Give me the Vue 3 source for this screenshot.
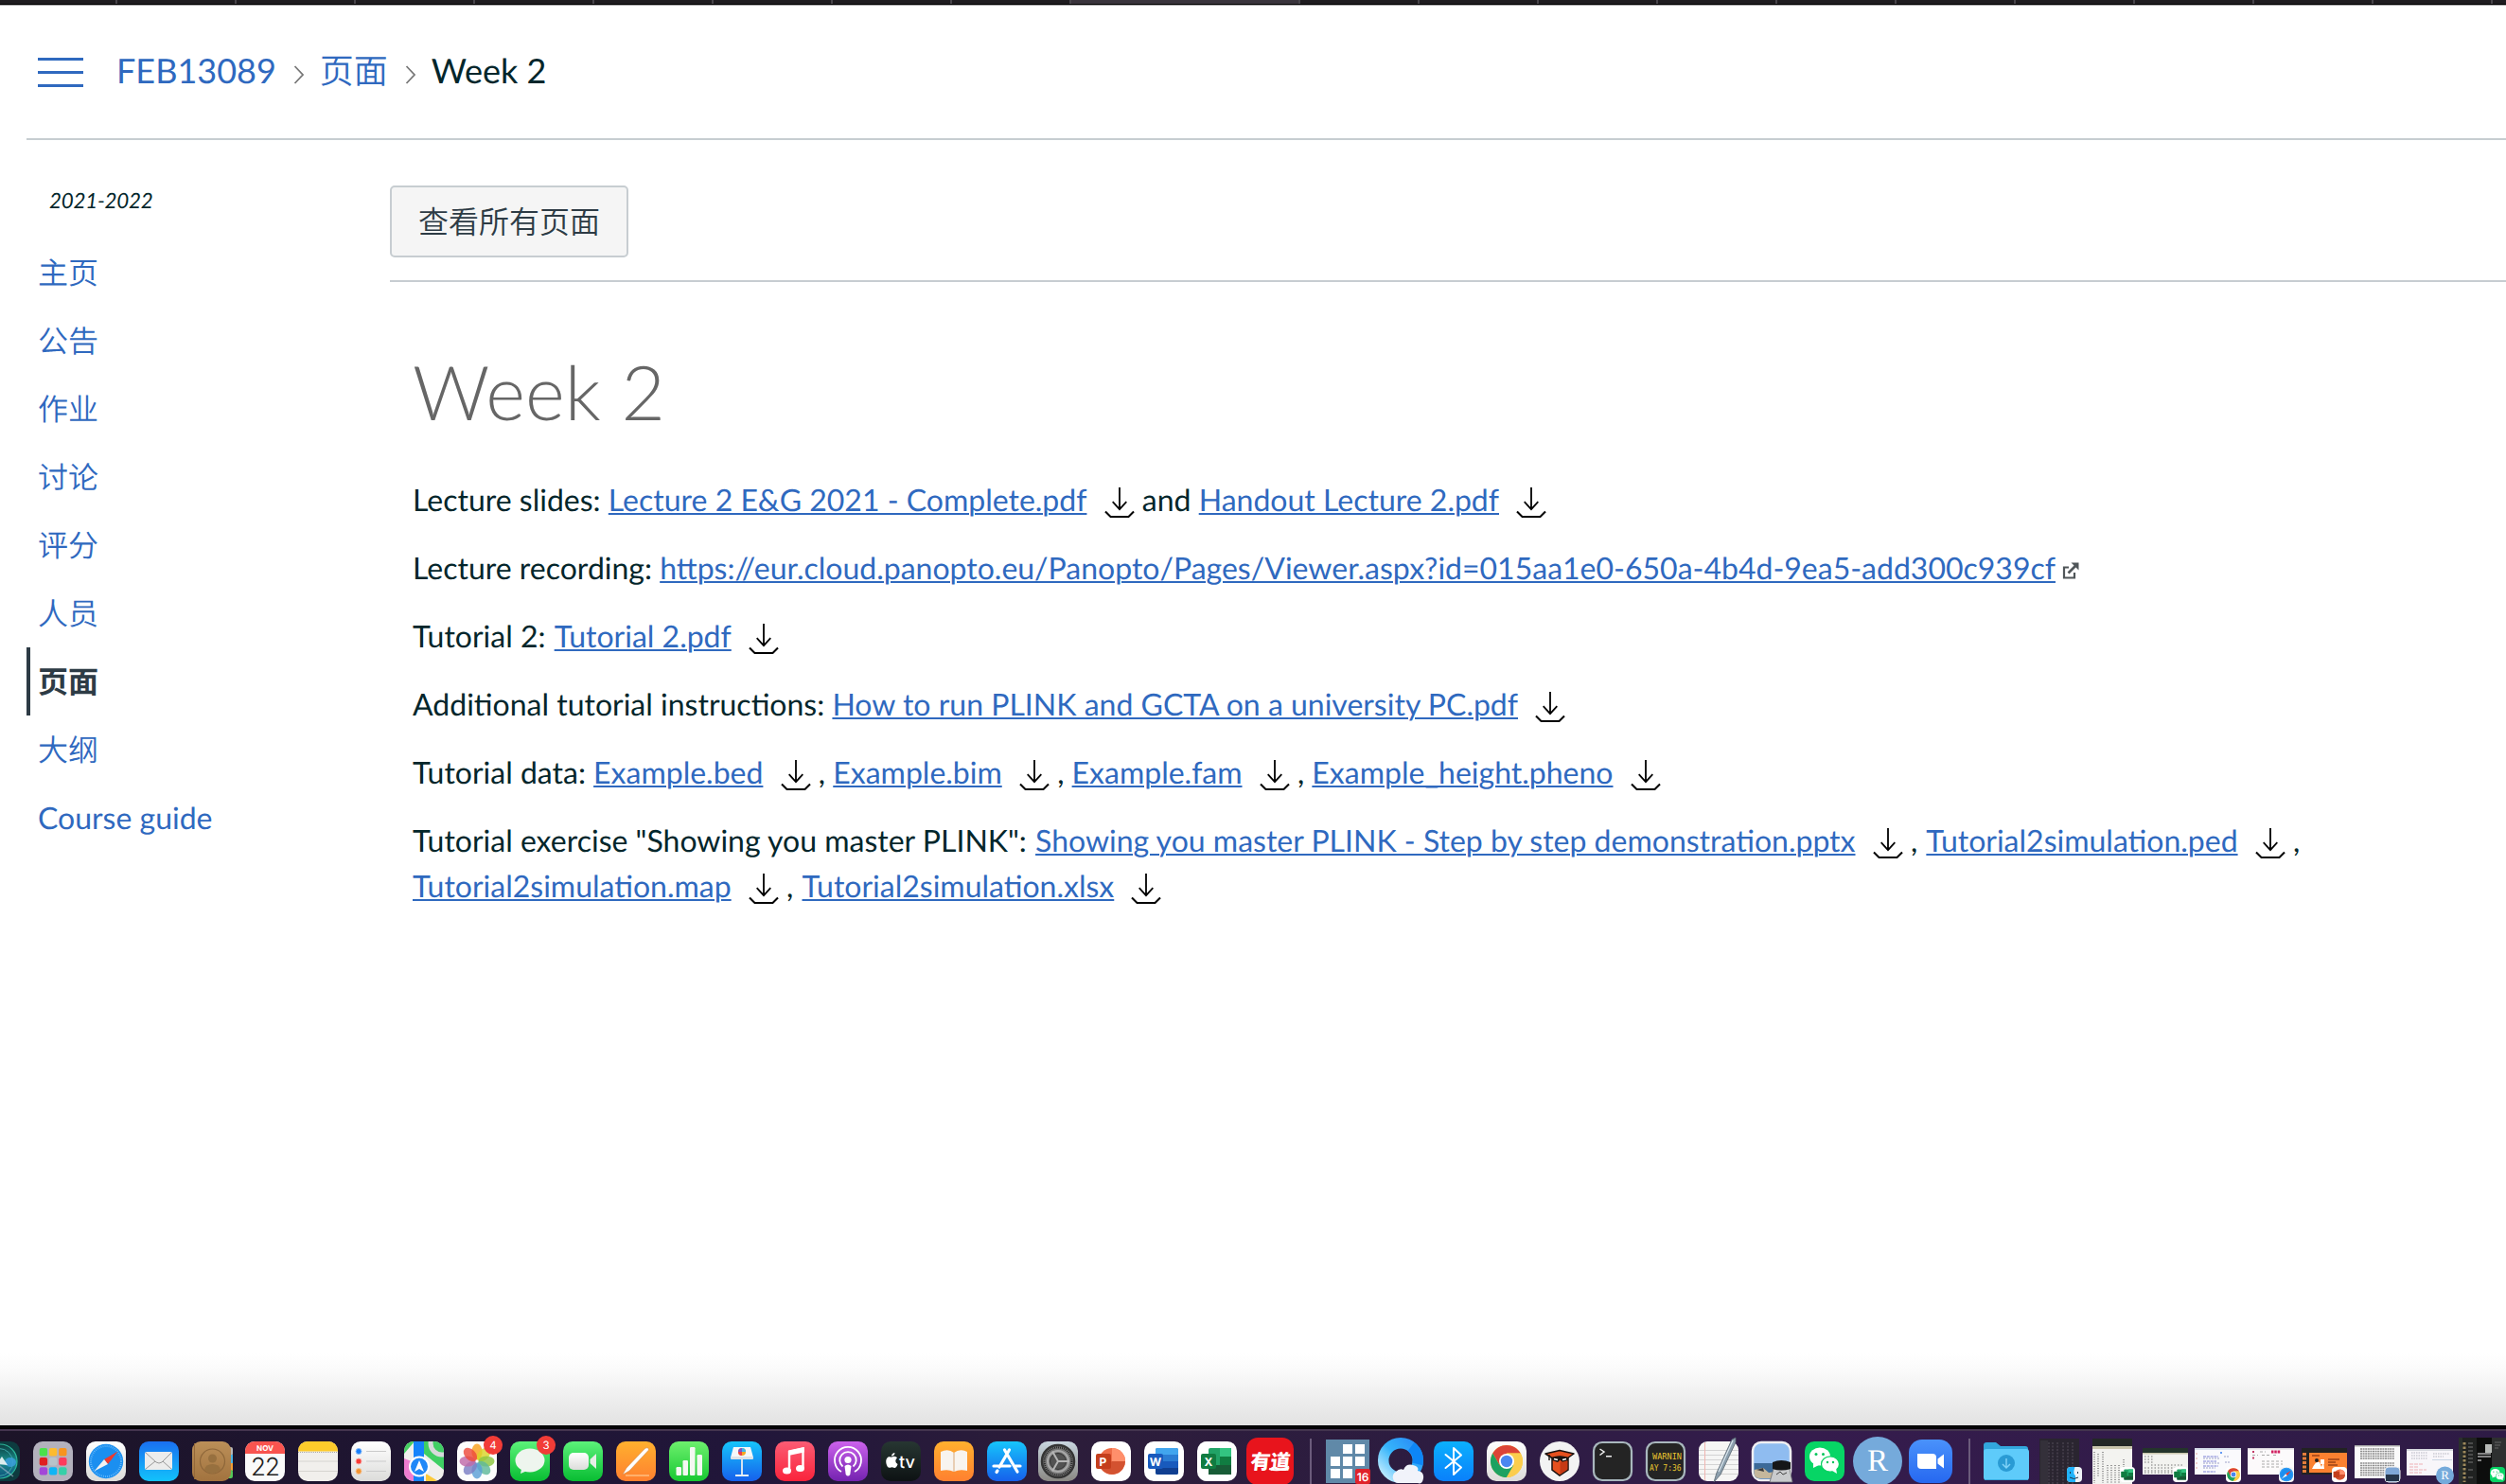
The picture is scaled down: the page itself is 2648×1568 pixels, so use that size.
<script setup>
const tabs = [122, ...Array(8).fill(124), 240, ...Array(10).fill(124)]
const nav = [
  { label: '主页', zh: true }, { label: '公告', zh: true }, { label: '作业', zh: true }, { label: '讨论', zh: true },
  { label: '评分', zh: true }, { label: '人员', zh: true }, { label: '页面', active: true },
  { label: '大纲', zh: true }, { label: 'Course guide' },
]
const rows = [
  { lead: 'Lecture slides: ', files: [{ name: 'Lecture 2 E&G 2021 - Complete.pdf', after: ' and ' }, { name: 'Handout Lecture 2.pdf' }] },
  { lead: 'Lecture recording: ', files: [{ name: 'https://eur.cloud.panopto.eu/Panopto/Pages/Viewer.aspx?id=015aa1e0-650a-4b4d-9ea5-add300c939cf', external: true }] },
  { lead: 'Tutorial 2: ', files: [{ name: 'Tutorial 2.pdf', nudge: true }] },
  { lead: 'Additional tutorial instructions: ', files: [{ name: 'How to run PLINK and GCTA on a university PC.pdf' }] },
  { lead: 'Tutorial data: ', files: [{ name: 'Example.bed', after: ' , ' }, { name: 'Example.bim', after: ' , ' }, { name: 'Example.fam', after: ' , ' }, { name: 'Example_height.pheno' }] },
  { lead: 'Tutorial exercise "Showing you master PLINK": ', files: [{ name: 'Showing you master PLINK - Step by step demonstration.pptx', after: ' , ', nudge: true }, { name: 'Tutorial2simulation.ped', after: ' , ', nudge: true }, { name: 'Tutorial2simulation.map', after: ' , ' }, { name: 'Tutorial2simulation.xlsx', nudge: true }] },
]
const launch = ['#4be04b', '#fdbb2f', '#f7941e', '#e02020', '#b9c3c9', '#ff3b5c', '#a347d8', '#10b5f5', '#35d0a8']
const petals = ['#f8a01c', '#d9d428', '#8cc63f', '#5fb89a', '#5a9fd6', '#7b7fc4', '#c069a8', '#ee4a3c']
</script>

<template>
  <div class="screen">
    <div class="tabstrip">
      <i v-for="(w, i) in tabs" :key="i" class="tab" :class="{ current: i === 9 }" :style="{ width: w + 'px' }"></i>
    </div>

    <header class="crumbs">
      <svg class="burger" width="48" height="34" viewBox="0 0 48 34"><path d="M0 2.5H48M0 16.5H48M0 30.5H48" stroke="#2f69bf" stroke-width="3" /></svg>
      <a class="crumb">FEB13089</a>
      <svg class="chev" width="12" height="20" viewBox="0 0 12 20"><path d="M1.5 1L10 10L1.5 19" fill="none" stroke="#777" stroke-width="1.8" /></svg>
      <a class="crumb zh">页面</a>
      <svg class="chev" width="12" height="20" viewBox="0 0 12 20"><path d="M1.5 1L10 10L1.5 19" fill="none" stroke="#777" stroke-width="1.8" /></svg>
      <span class="crumb here">Week 2</span>
    </header>

    <div class="body">
      <nav class="side">
        <div class="term">2021-2022</div>
        <a v-for="n in nav" :key="n.label" class="item" :class="{ active: n.active, zh: n.zh }">{{ n.label }}</a>
      </nav>
      <main class="main">
        <div class="toolbar"><button class="all">查看所有页面</button></div>
        <article class="page">
          <h1>Week 2</h1>
          <p v-for="r in rows" :key="r.lead">{{ r.lead }}<template v-for="f in r.files" :key="f.name"><a class="file" :class="{ nudge: f.nudge }">{{ f.name }}</a><svg v-if="f.external" class="ext" width="18" height="18" viewBox="0 0 18 18"><g fill="none" stroke="#505659" stroke-width="2.2"><path d="M7 5.5H2V16.5H13V11" /><path d="M6.5 11.5L14.5 3.5" stroke-width="2.6" /></g><path d="M9.5 .5H17.5V8.5Z" fill="#505659" /></svg><svg v-else class="dl" width="32" height="34" viewBox="0 0 32 34"><g fill="none" stroke="#000" stroke-width="1.8"><path d="M16 0V23M8.7 15.2L16 23.2L23.3 15.2" /><path d="M1 25.5L6.5 31H25.5L31 25.5" stroke-width="2.1" /></g></svg>{{ f.after }}</template></p>
        </article>
      </main>
    </div>

    <div class="shade"></div>
    <svg class="defs" width="0" height="0">
      <defs>
        <linearGradient id="blue" x2="0" y2="1"><stop stop-color="#1a6ff0" /><stop offset="1" stop-color="#12c3fb" /></linearGradient>
        <linearGradient id="green" x2="0" y2="1"><stop stop-color="#5cf27a" /><stop offset="1" stop-color="#08bd32" /></linearGradient>
        <linearGradient id="orange" x2="0" y2="1"><stop stop-color="#ffb02e" /><stop offset="1" stop-color="#ff8030" /></linearGradient>
        <linearGradient id="sky" x2="0" y2="1"><stop stop-color="#16c5fb" /><stop offset="1" stop-color="#1660ec" /></linearGradient>
        <linearGradient id="pink" x2="0" y2="1"><stop stop-color="#fb5c74" /><stop offset="1" stop-color="#fa233b" /></linearGradient>
        <linearGradient id="purple" x2="0" y2="1"><stop stop-color="#cc62ec" /><stop offset="1" stop-color="#7423b0" /></linearGradient>
        <linearGradient id="dark" x2="0" y2="1"><stop stop-color="#273632" /><stop offset="1" stop-color="#0d1213" /></linearGradient>
        <linearGradient id="brown" x2="0" y2="1"><stop stop-color="#bb8f58" /><stop offset="1" stop-color="#a2733f" /></linearGradient>
        <linearGradient id="gray" x2="0" y2="1"><stop stop-color="#c9d6e0" /><stop offset="1" stop-color="#8a8883" /></linearGradient>
        <linearGradient id="white" x2="0" y2="1"><stop stop-color="#fff" /><stop offset="1" stop-color="#dcdcda" /></linearGradient>
        <linearGradient id="bars" x2="0" y2="1"><stop stop-color="#6df06d" /><stop offset="1" stop-color="#17c832" /></linearGradient>
        <linearGradient id="tooth" x2="0" y2="1"><stop stop-color="#0bb0fd" /><stop offset="1" stop-color="#0a80fb" /></linearGradient>
        <linearGradient id="zoomg" x2="0" y2="1"><stop stop-color="#4a92fb" /><stop offset="1" stop-color="#2668f0" /></linearGradient>
        <linearGradient id="ring" x1="1" y1="0" x2="0" y2="1"><stop stop-color="#2a8df6" /><stop offset=".5" stop-color="#35b4fb" /><stop offset="1" stop-color="#c5edff" /></linearGradient>
        <linearGradient id="siri" x2="0" y2="1"><stop stop-color="#0b3b3d" /><stop offset=".5" stop-color="#1a8f8c" /><stop offset="1" stop-color="#0f4f7c" /></linearGradient>
        <clipPath id="tile"><rect x="-21" y="11" width="42" height="42" rx="10" /></clipPath>
        <g id="compass"><circle r="18.2" fill="#1b8ff0" /><circle r="16" fill="none" stroke="#8fd0ff" stroke-width="2" stroke-dasharray=".8 1.3" opacity=".7" /><path d="M12.5 -10.5L2 3L-2 -2Z" fill="#f0392e" /><path d="M-12.5 10.5L2 3L-2 -2Z" fill="#f2f2f2" /></g>
        <g id="wheel"><circle r="17" fill="#fbc93d" /><path d="M-14.7 -8.5A17 17 0 0 1 14.7 -8.5L0 -8.5L-7.4 4.2Z" fill="#dc4437" /><path d="M-14.7 -8.5A17 17 0 0 0 0 17L7.4 4.2L-7.4 4.2Z" fill="#1da261" /><path d="M0 -8.5H14.7A17 17 0 0 1 0 17L7.4 4.2Z" fill="#fbcd4c" /><circle r="8" fill="#fff" /><circle r="6.2" fill="#4a87f0" /></g>
        <g id="xl"><rect x="-9" y="-14" width="24" height="28" rx="2" fill="#21a366" /><rect x="3" y="-14" width="12" height="9" fill="#33c481" /><rect x="3" y="-5" width="12" height="9" fill="#107c41" /><rect x="-9" y="4" width="24" height="10" fill="#185c37" /><rect x="-17" y="-8" width="16" height="16" rx="2" fill="#107c41" /></g>
        <g id="pp"><circle cx="1" r="14" fill="#ed6c47" /><path d="M1 -14A14 14 0 0 1 15 0H1Z" fill="#ff8f6b" /><path d="M1 0H15A14 14 0 0 1 -11 7Z" fill="#d35230" /><rect x="-16" y="-8" width="16" height="16" rx="2" fill="#c43e1c" /></g>
        <g id="chat"><ellipse cx="-4" cy="-4" rx="11" ry="9.5" fill="#fff" /><path d="M-11 2L-11 8L-5 5Z" fill="#fff" /><circle cx="-8" cy="-6.500" r="1.500" fill="#07c45b" /><circle cx="-.5" cy="-6.500" r="1.500" fill="#07c45b" /><ellipse cx="7" cy="4" rx="9.500" ry="8.200" fill="#fff" stroke="#07d160" stroke-width="1.200" /><path d="M9 11L14 14L13 8Z" fill="#fff" /><circle cx="4" cy="2" r="1.200" fill="#07c45b" /><circle cx="10" cy="2" r="1.200" fill="#07c45b" /></g>
      </defs>
    </svg>
    <footer class="dock">
      <svg class="app" viewBox="-28 0 56 56"><g clip-path="url(#tile)"><rect x="-21" y="11" width="42" height="42" fill="#0d3b3f" /><circle cy="32" r="18" fill="url(#siri)" stroke="#2cb69a" stroke-width="1.200" /><circle cx="-1" cy="33" r="14.500" fill="none" stroke="#3fa6a8" stroke-width="1" /><ellipse cx="11" cy="33" rx="6" ry="5" fill="#3d9fe0" opacity=".8" /><path d="M-4 35L2 27L8 36Z" fill="#fff" opacity=".85" /><path d="M-3 35L14 48" stroke="#a8b9d0" stroke-width="1.500" opacity=".6" /></g></svg>
      <svg class="app" viewBox="-28 0 56 56"><rect x="-21" y="11" width="42" height="42" rx="10" fill="#b3b1bd" /><rect v-for="(c, i) in launch" :key="c" :x="-14.3 + (i % 3) * 10.2" :y="18 + Math.floor(i / 3) * 10.1" width="8.400" height="8.400" rx="2" :fill="c" /></svg>
      <svg class="app" viewBox="-28 0 56 56"><rect x="-21" y="11" width="42" height="42" rx="10" fill="url(#white)" /><use href="#compass" transform="translate(0 32)" /></svg>
      <svg class="app" viewBox="-28 0 56 56"><rect x="-21" y="11" width="42" height="42" rx="10" fill="url(#blue)" /><rect x="-15" y="22" width="29" height="19" rx="2" fill="#ececec" /><path d="M-14 23L-3 33Q0 35 3 33L13 23M-14 40L-4 32M13 40L4 32" fill="none" stroke="#999" stroke-width="1" /></svg>
      <svg class="app" viewBox="-28 0 56 56"><rect x="14" y="17" width="8" height="9" rx="2" fill="#b8b8b8" /><rect x="14" y="25" width="8" height="9" fill="#48b4e8" /><rect x="14" y="34" width="8" height="8" fill="#f59d34" /><rect x="14" y="41" width="8" height="9" rx="2" fill="#55c858" /><rect x="-21" y="11" width="41" height="42" rx="9" fill="url(#brown)" /><path d="M-18.500 13V51" stroke="#94683a" stroke-width="1" /><g fill="#97703f"><circle cx=".5" cy="32" r="13" fill="none" stroke="#8e673a" stroke-width="1.200" /><circle cx=".5" cy="29" r="4.500" /><path d="M-8 41Q-7 35 .5 35T9 41Q0 48 -8 41Z" /></g></svg>
      <svg class="app" viewBox="-28 0 56 56"><rect x="-21" y="11" width="42" height="42" rx="10" fill="#fafafa" /><path d="M-21 24V21A10 10 0 0 1 -11 11H11A10 10 0 0 1 21 21V24Z" fill="#f9544f" /><text y="20.800" class="cal-m">NOV</text><text y="47" class="cal-d">22</text></svg>
      <svg class="app" viewBox="-28 0 56 56"><rect x="-21" y="11" width="42" height="42" rx="10" fill="#f1efec" /><path d="M-21 21.500A10 10 0 0 1 -11 11H11A10 10 0 0 1 21 21.500Z" fill="#fdcb2b" /><path d="M-21 22.500H21" stroke="#aaa" stroke-dasharray="1 1" /><path d="M-21 32H21M-21 42.500H21" stroke="#d6d4d0" /></svg>
      <svg class="app" viewBox="-28 0 56 56"><rect x="-21" y="11" width="42" height="42" rx="10" fill="url(#white)" /><path d="M-5 21.500H16M-5 32H16M-5 42.500H16" stroke="#cbcbcb" /><g stroke-width="1"><circle cx="-13" cy="21.500" r="3" fill="#157efb" stroke="#8bbcf8" /><circle cx="-13" cy="32" r="3" fill="#f93a35" stroke="#f9a29f" /><circle cx="-13" cy="42.500" r="3" fill="#f39330" stroke="#f5c596" /></g></svg>
      <svg class="app" viewBox="-28 0 56 56"><g clip-path="url(#tile)"><rect x="-21" y="11" width="42" height="42" fill="#f0efec" /><path d="M-21 11H-10L-21 24Z" fill="#45cf61" /><path d="M-21 29L-8 34V53H-21Z" fill="#ee7cd0" /><path d="M0 11H21V41L0 24Z" fill="#3fcf63" /><path d="M-11 11H0V53H-11Z" fill="#1583fb" /><path d="M2 45L15 53H2Z" fill="#fcca3a" /><circle cx="19" cy="13" r="12" fill="none" stroke="#d6dadb" stroke-width="5" /></g><circle cx="-5" cy="37.500" r="10" fill="#2088f8" stroke="#fff" stroke-width="2" /><path d="M-5 31L0 43L-5 40L-10 43Z" fill="#fff" /></svg>
      <svg class="app" viewBox="-28 0 56 56"><rect x="-21" y="11" width="42" height="42" rx="10" fill="#fdfdfd" /><ellipse v-for="(c, i) in petals" :key="c" cx="0" cy="22" rx="5.600" ry="8.500" :fill="c" opacity=".82" :transform="`rotate(${i * 45} 0 32)`" /><circle cx="17" cy="15" r="10" fill="#f23c37" /><text x="17" y="19" class="badge">4</text></svg>
      <svg class="app" viewBox="-28 0 56 56"><rect x="-21" y="11" width="42" height="42" rx="10" fill="url(#green)" /><path d="M-9 40L-10 45L-3 42Z" fill="#e8f2ea" /><ellipse cy="31" rx="15.500" ry="12.500" fill="#eef5ee" /><circle cx="17" cy="15" r="10" fill="#f23c37" /><text x="17" y="19" class="badge">3</text></svg>
      <svg class="app" viewBox="-28 0 56 56"><rect x="-21" y="11" width="42" height="42" rx="10" fill="url(#green)" /><rect x="-15" y="23" width="21" height="18" rx="5" fill="url(#white)" /><path d="M7.500 30L14 24V40L7.500 34Z" fill="#e6eee6" /></svg>
      <svg class="app" viewBox="-28 0 56 56"><rect x="-21" y="11" width="42" height="42" rx="10" fill="url(#orange)" /><path d="M-11 47H14" stroke="#ffd9a8" stroke-width="1" /><path d="M-14 46L-10 39L9 19Q13 16 13.500 20L-7 42Z" fill="#fff" stroke="#c98548" stroke-width=".5" /></svg>
      <svg class="app" viewBox="-28 0 56 56"><rect x="-21" y="11" width="42" height="42" rx="10" fill="url(#bars)" /><g fill="#f4f8f2"><rect x="-13.500" y="38" width="5.500" height="9" rx="1.200" /><rect x="-6.500" y="31" width="5.500" height="16" rx="1.200" /><rect x="1" y="17" width="5.500" height="30" rx="1.200" /><rect x="8.500" y="25" width="5.500" height="22" rx="1.200" /></g></svg>
      <svg class="app" viewBox="-28 0 56 56"><rect x="-21" y="11" width="42" height="42" rx="10" fill="url(#sky)" /><path d="M-9 17H9L12 28H-12Z" fill="#f6f8fa" /><rect x="-12" y="27" width="24" height="3" rx="1" fill="#dfe3e7" /><path d="M0 30V46" stroke="#d5e2f0" stroke-width="2" /><path d="M-7 47H7" stroke="#e8eef5" stroke-width="2" /><circle cy="22" r="4" fill="#f5a623" /><path d="M0 22V18A4 4 0 0 0 -4 22Z" fill="#7d55c9" /><path d="M0 22H-4A4 4 0 0 0 0 26Z" fill="#e83f4b" /><path d="M0 22V18A4 4 0 0 1 4 22Z" fill="#3eb9ee" /></svg>
      <svg class="app" viewBox="-28 0 56 56"><rect x="-21" y="11" width="42" height="42" rx="10" fill="url(#pink)" /><path d="M-6 42V22L8.500 18.500V39" fill="none" stroke="#fff" stroke-width="2.400" /><path d="M-7 20.500L9.700 17V22.500L-7 26Z" fill="#fff" /><ellipse cx="-8.500" cy="42" rx="4.500" ry="3.600" fill="#fff" /><ellipse cx="5.500" cy="39.500" rx="4.500" ry="3.600" fill="#fff" /></svg>
      <svg class="app" viewBox="-28 0 56 56"><rect x="-21" y="11" width="42" height="42" rx="10" fill="url(#purple)" /><g fill="none" stroke="#fff" stroke-width="1.800"><path d="M-7 43A14 14 0 1 1 7 43" /><path d="M-5.500 37.500A8.700 8.700 0 1 1 5.500 37.500" /></g><circle cy="30.500" r="3.600" fill="#fff" /><path d="M-3.500 37Q0 34 3.500 37L2.300 46Q0 49 -2.300 46Z" fill="#fff" /></svg>
      <svg class="app" viewBox="-28 0 56 56"><rect x="-21" y="11" width="42" height="42" rx="10" fill="url(#dark)" /><path d="M-9.500 27.500C-7 26 -5 27 -4 28.500C-6.500 30.500 -6 33.500 -3.400 35C-4.500 38 -6 39.500 -7.500 38.700C-9 38 -10 38 -11.500 38.700C-15 40 -18 30 -13.500 27.500C-12 26.700 -11 27.500 -9.500 27.500ZM-10 26.500C-10 24.500 -8 23 -6.500 23C-6.500 25 -8 26.500 -10 26.500Z" fill="#fff" /><text x="6.500" y="38.500" class="tv">tv</text></svg>
      <svg class="app" viewBox="-28 0 56 56"><rect x="-21" y="11" width="42" height="42" rx="10" fill="url(#orange)" /><path d="M-14 22Q-6 18 0 23Q6 18 14 22V42Q6 40 0 43Q-6 40 -14 42Z" fill="#f8f4ef" /><path d="M0 23V43" stroke="#d8a878" stroke-width="1" /></svg>
      <svg class="app" viewBox="-28 0 56 56"><rect x="-21" y="11" width="42" height="42" rx="10" fill="url(#sky)" /><path d="M-2.500 20L11 43M2.500 20L-8 38M-10 42L-11 43.500M-14 37H3M9 37H14" stroke="#fff" stroke-width="3.200" stroke-linecap="round" /></svg>
      <svg class="app tuck" viewBox="-28 0 56 56"><rect x="-21" y="11" width="42" height="42" rx="10" fill="url(#gray)" /><g fill="none" stroke="#343434"><circle cy="32" r="17" fill="#777" stroke-width="2.500" /><circle cy="32" r="14.500" stroke="#222" stroke-width="2" stroke-dasharray="1 1" /><circle cy="32" r="11" stroke="#a8a8a8" stroke-width="2" /><circle cy="32" r="8.500" fill="#525252" stroke-width="1" /><path d="M0 32H12M0 32L-6 21.500M0 32L-6 42.500" stroke="#b4b4b4" stroke-width="2" /></g></svg>
      <svg class="app" viewBox="-28 0 56 56"><rect x="-21" y="11" width="42" height="42" rx="10" fill="#fff" /><use href="#pp" transform="translate(0 32)" /><text x="-8.500" y="36.500" class="ltr">P</text></svg>
      <svg class="app" viewBox="-28 0 56 56"><rect x="-21" y="11" width="42" height="42" rx="10" fill="#fff" /><rect x="-9" y="18" width="24" height="28" rx="2" fill="#2b7cd3" /><path d="M-9 25V20A2 2 0 0 1 -7 18H13A2 2 0 0 1 15 20V25Z" fill="#41a5ee" /><rect x="-9" y="32" width="24" height="7" fill="#185abd" /><path d="M-9 39H15V44A2 2 0 0 1 13 46H-7A2 2 0 0 1 -9 44Z" fill="#103f91" /><rect x="-17" y="24" width="16" height="16" rx="2" fill="#185abd" /><text x="-9" y="36.500" class="ltr">W</text></svg>
      <svg class="app" viewBox="-28 0 56 56"><rect x="-21" y="11" width="42" height="42" rx="10" fill="#fff" /><use href="#xl" transform="translate(0 32)" /><text x="-9" y="36.500" class="ltr">X</text></svg>
      <svg class="app" viewBox="-28 0 56 56"><rect x="-25" y="7" width="50" height="50" rx="12" fill="#e8141c" /><text y="40" class="yd" transform="skewX(-6) translate(4 0)">有道</text><path d="M-1 40Q10 43.500 20 37.500" fill="none" stroke="#fff" stroke-width="2" /></svg>
      <i class="sep first"></i>
      <svg class="app" viewBox="-28 0 56 56"><rect x="-23" y="9" width="46" height="46" fill="#6089a8" /><path d="M-5 14h10v10h-10zM8 14h10v10h-10zM-18 27h10v10h-10zM-5 27h10v10h-10zM8 27h10v10h-10zM-18 40h10v10h-10zM-5 40h10v10h-10z" fill="#fff" /><rect x="8" y="40" width="16" height="16" rx="2" fill="#e0222a" /><text x="16" y="52.500" class="b16">16</text></svg>
      <svg class="app" viewBox="-28 0 56 56"><circle cy="31" r="18.300" fill="none" stroke="url(#ring)" stroke-width="11.500" /><path d="M11 16.500A18.300 18.300 0 0 1 18 35" fill="none" stroke="#0d86f6" stroke-width="11" /><path d="M-3 55A6.500 6.500 0 0 1 -5 43Q-1 39 3 41Q6 34 13 36T18 42Q25 43 24 50T18 55Z" fill="#f1f3fa" /></svg>
      <svg class="app" viewBox="-28 0 56 56"><rect x="-21" y="11" width="42" height="42" rx="10" fill="url(#tooth)" /><path d="M-8.500 25L8 38.500L0 46V18L8 25.500L-8.500 39" fill="none" stroke="#fff" stroke-width="2" stroke-linejoin="round" stroke-linecap="round" /></svg>
      <svg class="app" viewBox="-28 0 56 56"><rect x="-21" y="11" width="42" height="42" rx="10" fill="url(#white)" /><use href="#wheel" transform="translate(0 32)" /></svg>
      <svg class="app" viewBox="-28 0 56 56"><circle cy="32" r="21" fill="#f3f3f3" /><path d="M-8 28H9V41L0 47L-8 41Z" fill="#e6501e" stroke="#1b1310" stroke-width="1.500" /><path d="M-15 24L0 20.500L15 24L8.500 28.500Q0 25.500 -8 28.500Z" fill="#e6501e" stroke="#1b1310" stroke-width="1.500" stroke-linejoin="round" /><path d="M-8 28Q0 25.500 9 28V31L3 33L.5 30.500L-2 33L-8 31Z" fill="#1b1310" /><path d="M-6 29.500L-2 30.500M7 29.500L3 30.500" stroke="#fff" stroke-width="1.800" /><path d="M-11 25V31" stroke="#1b1310" stroke-width="1.400" /><path d="M.5 33V46L8.300 40.500V32Z" fill="#c63a14" /></svg>
      <svg class="app" viewBox="-28 0 56 56"><rect x="-20" y="12" width="40" height="40" rx="9" fill="#242424" stroke="#a9b8be" stroke-width="2.200" /><path d="M-13.500 19L-9 22L-13.500 25.500M-7 26.800H-1" fill="none" stroke="#eee" stroke-width="1.500" /></svg>
      <svg class="app" viewBox="-28 0 56 56"><rect x="-20" y="12" width="40" height="40" rx="9" fill="#242424" stroke="#a9b8be" stroke-width="2.200" /><text x="-14" y="30" class="warn" textLength="31" lengthAdjust="spacingAndGlyphs">WARNIN</text><text x="-17" y="41.500" class="warn" textLength="33.500" lengthAdjust="spacingAndGlyphs">AY 7:36</text></svg>
      <svg class="app" viewBox="-28 0 56 56"><rect x="-21" y="11" width="42" height="42" rx="9" fill="#f6f6f5" /><path d="M-21 20.500H21M-21 25.500H21M-21 30.500H21M-21 35.500H21M-21 40.500H21M-21 45.500H21" stroke="#cfcfcf" stroke-width=".9" /><path d="M-14.500 12V52" stroke="#f0b5b0" /><path d="M-5 54L-2 44L14 9L18 7L18 12L2 46Z" fill="#8da0ae" stroke="#55636e" stroke-width=".8" /><path d="M0 43L15 10" stroke="#dbe6ee" stroke-width="1.200" /></svg>
      <svg class="app" viewBox="-28 0 56 56"><rect x="-20" y="12" width="40" height="40" rx="9" fill="#8fbcf0" stroke="#f0eff2" stroke-width="2.500" /><path d="M-18.500 34H18.500V44Q18.500 50.500 12 50.500H-12Q-18.500 50.500 -18.500 44Z" fill="#3c6a99" /><path d="M-18.500 41L-9 39L-3 44L4 43V50H-12Q-18.500 50 -18.500 44Z" fill="#c5b79c" /><path d="M-16 41L-9 39L-8 43Z" fill="#3a3a3c" /><path d="M2 40H19L22 54H-2Z" fill="#c9cbcd" stroke="#6b6d70" stroke-width=".8" /><path d="M1 33Q10 29 20 33V40Q10 43 1 40Z" fill="#151618" /><path d="M5 46L9 43L12 46L16 44" fill="none" stroke="#444" /></svg>
      <svg class="app" viewBox="-28 0 56 56"><rect x="-21" y="11" width="42" height="42" rx="10" fill="#07d565" /><use href="#chat" transform="translate(-1 31)" /></svg>
      <svg class="app" viewBox="-28 0 56 56"><circle cy="32" r="26" fill="#75aadb" /><text y="42" class="rlogo" font-size="33">R</text></svg>
      <svg class="app" viewBox="-28 0 56 56"><rect x="-23" y="9" width="46" height="46" rx="14" fill="url(#zoomg)" /><path d="M-14 24H2Q6 24 6 28V40H-10Q-14 40 -14 36Z" fill="#fff" /><path d="M7.500 29.500L14 24.500V39.500L7.500 34.500Z" fill="#fff" /></svg>
      <i class="sep second"></i>
      <svg class="app" viewBox="-28 0 56 56"><path d="M-24 15Q-24 12 -21 12H-11L-6 16H20Q23 16 23 19V30H-24Z" fill="#32a7dd" /><rect x="-24" y="19" width="48" height="33" rx="3" fill="#5ecbfa" /><path d="M-23 51.500H23" stroke="#39a9dc" /><circle cy="34" r="9" fill="#2a9bd4" /><path d="M0 29V38.500M-4 35L0 39L4 35" fill="none" stroke="#7fd2f8" stroke-width="1.500" /></svg>
      <svg class="app" viewBox="-28 0 56 56"><rect x="-21" y="8" width="42" height="48" fill="#2a2530" /><path d="M-11 12V56M-7 12V56M-2 12V56M4 12V56M9 12V56M14 12V56" stroke="#544e5b" stroke-dasharray="2 1.500" /><rect x="-20" y="10" width="8" height="46" fill="#34303a" /><rect x="8" y="38" width="16" height="16" rx="4" fill="#eef2f6" /><path d="M12 38H16.500Q14 46 17 47V54H12A4 4 0 0 1 8 50V42A4 4 0 0 1 12 38Z" fill="#20b2fa" /><path d="M11.500 43V45M19.500 43V45M11 49Q15.500 52 20 49" fill="none" stroke="#234" /></svg>
      <svg class="app" viewBox="-28 0 56 56"><rect x="-21" y="8" width="42" height="48" fill="#f3f3f0" /><rect x="-21" y="8" width="42" height="9" fill="#232826" /><rect x="-21" y="16" width="42" height="3" fill="#c9c6ad" /><path d="M-19 22V55M-15 24V48M-10 22V55M-5 36V55M-1 36V55M3 36V55M7 36V55M12 30V55" stroke="#777" stroke-dasharray="1 1.500" stroke-width="2" opacity=".7" /><rect x="8" y="38" width="16" height="16" rx="4" fill="#fff" /><use href="#xl" transform="translate(16 46) scale(.4)" /></svg>
      <svg class="app" viewBox="-28 0 56 56"><rect x="-24" y="18" width="48" height="28" fill="#f3f3f0" /><rect x="-24" y="18" width="48" height="5" fill="#24342b" /><rect x="-24" y="23" width="48" height="1.500" fill="#c9c6ad" /><path d="M-22 27H-12M-22 30H-13M-22 33H-12M-15 36H20M-22 39H20M-22 42H20M-22 44H20" stroke="#777" stroke-dasharray="1.500 2" /><rect x="8" y="38" width="16" height="16" rx="4" fill="#fff" /><use href="#xl" transform="translate(16 46) scale(.4)" /></svg>
      <svg class="app" viewBox="-28 0 56 56"><rect x="-25" y="18" width="49" height="28" fill="#fafafd" /><rect x="-25" y="18" width="49" height="2" fill="#d4dbe8" /><path d="M-16 27H0M-16 32H-2M-16 37H0M-16 43H-3" stroke="#7a7fd4" stroke-dasharray="3 .8" /><path d="M-16 29H1M-16 34H1M-16 39H-3M6 27H12M7 33H12" stroke="#9ea2c7" stroke-dasharray="2 1" /><path d="M-23 23V42" stroke="#e8a49c" stroke-dasharray="2 3" /><circle cx="3" cy="23" r="1" fill="#357bf0" /><rect x="8" y="38" width="16" height="16" rx="4" fill="#fff" /><use href="#wheel" transform="translate(16 46) scale(.4)" /></svg>
      <svg class="app" viewBox="-28 0 56 56"><rect x="-25" y="18" width="49" height="28" fill="#fcfafb" /><rect x="-25" y="18" width="49" height="1.500" fill="#d8d4dc" /><path d="M0 22H10" stroke="#d02060" stroke-width="3" stroke-dasharray="2.500 .8" /><path d="M-20 22H-18M-20 28.500H-18" stroke="#c33b68" stroke-width="2" /><path d="M-12 22H-6M-20 25.500H-14M-10 25.500H-2M2 25.500H6M-10 32H12M-10 35H12M-10 38H10" stroke="#aaa" stroke-dasharray="3 2" /><rect x="8" y="38" width="16" height="16" rx="4" fill="#f4f4f4" /><use href="#compass" transform="translate(16 46) scale(.4)" /></svg>
      <svg class="app" viewBox="-28 0 56 56"><rect x="-24" y="18" width="48" height="28" fill="#222" /><rect x="-16" y="23" width="40" height="21" fill="#fb8130" /><path d="M-21 23V45" stroke="#e47c3c" stroke-width="4" stroke-dasharray="3 1.500" /><path d="M-13 26H-5M4 30H16M4 33H12M4 36H14" stroke="#9d4316" stroke-width="1.500" /><path d="M-13 40Q-9 31 -5 33L-3 38L-1 32L0 40Z" fill="#fff" /><circle cx="-8" cy="31" r="2" fill="#222" /><rect x="-4" y="30" width="4" height="5" fill="#fff" /><rect x="8" y="38" width="16" height="16" rx="4" fill="#fff" /><use href="#pp" transform="translate(16 46) scale(.4)" /></svg>
      <svg class="app" viewBox="-28 0 56 56"><rect x="-24" y="15" width="48" height="35" fill="#fafafa" /><rect x="-24" y="15" width="48" height="1.500" fill="#aaa" /><path d="M-18 19H18M-18 21.500H18M-18 24H18M-18 26.500H18M-18 29H18M-18 34H18M-18 36.500H18M-18 39H18M-18 41.500H18M-18 44H18M-18 46.500H18" stroke="#8d8d8d" stroke-width="1.300" stroke-dasharray="2 .6" /><rect x="8" y="38" width="16" height="16" rx="4" fill="#7fa7d6" stroke="#eee" /><path d="M9 46H23V53H9Z" fill="#26364a" /></svg>
      <svg class="app" viewBox="-28 0 56 56"><rect x="-25" y="19" width="49" height="28" fill="#f8f6fa" /><rect x="-25" y="19" width="49" height="2" fill="#d5d8de" /><path d="M-20 23H-3M-20 26H-3M-20 29H-3M3 24H20M3 27H14" stroke="#b5b5bf" stroke-dasharray="1.500 1" /><path d="M-22 35H-8M-22 38H-12M-22 41H-4M-22 44H-9" stroke="#eeb0b5" stroke-dasharray="4 1" /><rect x="2" y="30" width="21" height="1" fill="#c9d4e3" /><circle cx="15.500" cy="47" r="9.500" fill="#75aadb" /><text x="15.500" y="51" class="rlogo" font-size="13">R</text></svg>
      <svg class="app" viewBox="-28 0 56 56"><rect x="-26" y="7" width="50" height="49" fill="#0d0e0d" /><rect x="-26" y="7" width="4" height="49" fill="#2b302d" /><rect x="-22" y="7" width="15" height="49" fill="#202221" /><rect x="9" y="7" width="15" height="49" fill="#2e3030" /><rect x="2" y="14" width="7" height="9" fill="#b7bab7" /><path d="M-20 12V54" stroke="#9d8a5d" stroke-width="3" stroke-dasharray="2.500 2" /><path d="M-16 13H-11M-16 17H-11M-16 21H-11M-16 25H-11M-16 29H-11M-16 33H-11M-16 41H-11M-16 49H-11" stroke="#777" /><path d="M-6 24H8M-6 27H8M-6 31H-2" stroke="#aaa" stroke-width="1.500" /><path d="M12 12H19M12 15H18M12 18H16" stroke="#666" /><rect x="7" y="38" width="16" height="16" rx="4" fill="#07d565" /><use href="#chat" transform="translate(14.500 46) scale(.45)" /></svg>
    </footer>
  </div>
</template>

<style>
body { background: #fff; overflow: hidden; }
</style>

<style scoped>
.screen { width: 2648px; height: 1568px; display: flex; flex-direction: column; overflow: hidden; background: #fff; color: #03262b; font-family: Lato, "Noto Sans CJK SC", sans-serif; font-size: 32px; text-rendering: geometricPrecision; }
.tabstrip { flex: none; height: 4px; display: flex; overflow: hidden; background: #1f1c20; border-bottom: 1px solid #000; box-shadow: 0 1px 0 #a9a7aa; }
.tab { flex: none; box-sizing: content-box; height: 4px; border-right: 2px solid #48454b; }
.tab.current { background: #3a343c; }
.crumbs { flex: none; height: 141px; margin-left: 28px; padding-left: 12px; box-sizing: content-box; border-bottom: 2px solid #c7cdd1; display: flex; align-items: flex-start; }
.burger { margin: 55px 35px 0 0; }
.crumb { font-size: 36px; line-height: 44px; margin-top: 47px; white-space: nowrap; color: #2f69bf; font-weight: 400; }
.crumb.zh { font-weight: 350; }
.crumb.here { color: #03262b; }
.chev { margin: 64px 16px 0 18px; }
.body { flex: 1; display: flex; min-height: 0; }
.side { flex: none; width: 384px; padding-left: 28px; display: flex; flex-direction: column; }
.term { height: 104px; box-sizing: border-box; padding: 48px 0 0 24px; font-size: 22.4px; line-height: 32px; letter-spacing: -.25px; font-style: italic; }
.item { height: 72px; line-height: 72px; padding-left: 8px; border-left: 4px solid transparent; color: #2f69bf; }
.item.zh { font-weight: 350; }
.item.active { color: #2d3b45; border-color: #2d3b45; font-weight: 700; }
.main { flex: 1; min-width: 0; }
.toolbar { box-sizing: border-box; height: 150px; padding-top: 48px; border-bottom: 2px solid #c7cdd1; }
.all { display: block; box-sizing: border-box; width: 252px; height: 76px; padding: 0; border: 2px solid #c7cdd1; border-radius: 5px; background: #f5f5f5; color: #2d3b45; font: 350 32px/72px Lato, "Noto Sans CJK SC", sans-serif; }
.page { padding: 57px 190px 0 24px; }
h1 { margin: 0 0 29px; height: 120px; font-size: 80px; line-height: 119px; font-weight: 300; color: #666; }
p { margin: 0 0 24px; line-height: 48px; white-space: pre-wrap; }
.file { color: #2f69bf; text-decoration: underline; text-decoration-thickness: 2px; text-underline-offset: 2px; }
.file.nudge { margin-left: 1px; }
.dl { margin-left: 18.200px; vertical-align: -9px; height: 34px; }
.ext { margin-left: 7px; vertical-align: 0; }
.shade { flex: none; height: 76px; background: linear-gradient(#fff, #fafafa 25%, #e2e2e2); border-bottom: 4px solid #040306; }
.defs { position: absolute; }
.dock { flex: none; height: 56px; display: flex; border-top: 2px solid #44354f; background: linear-gradient(90deg, #1c1428, #21163a 30%, #2c1d3a 42%, #2d1c42 60%, #351c4d 72%, #2e1b45); }
.app { flex: none; width: 56px; height: 56px; overflow: visible; }
.app:first-child { margin-left: -28px; }
.tuck { margin-left: -2px; }
.sep { flex: none; width: 2px; height: 48px; margin-top: 8px; background: #6b5b7b; }
.first { margin-left: 14px; margin-right: 10px; }
.second { margin-left: 12px; margin-right: 10px; }
.app text { text-anchor: middle; fill: #fff; font-family: Inter, sans-serif; }
.app .cal-m { font-size: 8px; font-weight: 700; }
.app .cal-d { font-size: 26px; font-weight: 300; fill: #222; letter-spacing: -1px; }
.app .badge { font-size: 11.500px; }
.app .tv { font-size: 18px; font-weight: 500; }
.app .ltr { font-size: 12px; font-weight: 700; }
.app .yd { font-family: "Noto Sans CJK SC", sans-serif; font-size: 21px; font-weight: 900; }
.app .b16 { font-size: 12px; font-weight: 600; }
.app .warn { font-family: "DejaVu Sans Mono", monospace; font-size: 9.500px; fill: #e8c530; text-anchor: start; }
.app .rlogo { font-family: "Liberation Serif", serif; }
</style>
